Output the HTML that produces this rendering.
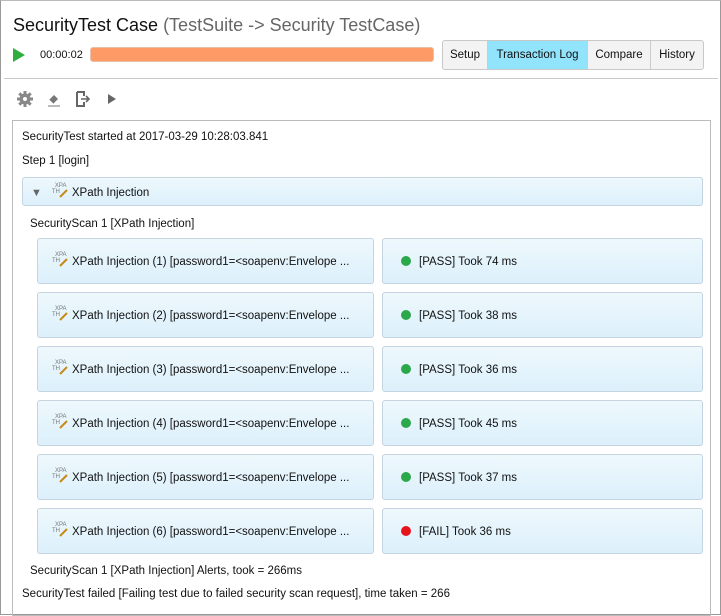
<!DOCTYPE html>
<html><head><style>
*{box-sizing:border-box;margin:0;padding:0}
body{width:721px;height:615px;overflow:hidden;background:#fff;font-family:"Liberation Sans",sans-serif;font-size:11.5px;color:#111;position:relative}
.frame{position:absolute;left:0;top:0;width:721px;height:615px;border:1px solid #999;border-top-color:#bbb}
.abs{position:absolute;white-space:nowrap}
.tabs{position:absolute;left:442px;top:40px;width:262px;height:30px;display:flex;border:1px solid #c8c8c8;border-radius:3px;overflow:hidden;background:#f3f3f3}
.tabs div{text-align:center;line-height:28px;font-size:11.5px;border-right:1px solid #ccc;white-space:nowrap}
.tabs div:last-child{border-right:none}
.panel{position:absolute;left:12px;top:120px;width:699px;height:496px;border:1px solid #bbb}
.box{position:absolute;height:46px;border:1px solid #c4d4e0;border-radius:3px;background:linear-gradient(#eef8fd,#dcf0fb);line-height:47px;padding-left:14px;white-space:nowrap}
.xp{display:inline-block;width:18px;height:16px;vertical-align:middle;position:relative;margin-right:2px;top:-2px}
.xp span{position:absolute;font-size:6px;color:#777;line-height:6px}
.dot{display:inline-block;width:10px;height:10px;border-radius:50%;background:#2aa84a;margin-right:8px;vertical-align:middle;position:relative;top:-1px}
</style></head><body>
<div class="frame"></div>
<div class="abs" style="left:13px;top:15px;font-size:18px;color:#111">SecurityTest Case <span style="color:#666">(TestSuite -&gt; Security TestCase)</span></div>
<svg class="abs" style="left:12px;top:47px" width="14" height="16"><path d="M1 1L13 8L1 15Z" fill="#2fae3f"/></svg>
<div class="abs" style="left:40px;top:49px;font-size:11px">00:00:02</div>
<div class="abs" style="left:90px;top:47px;width:344px;height:15px;background:#fe9a66;border:1px solid #e8c0a8;border-radius:3px"></div>
<div class="tabs"><div style="width:45px">Setup</div><div style="width:100px;background:#92e3fc">Transaction Log</div><div style="width:63px">Compare</div><div style="width:52px">History</div></div>
<div class="abs" style="left:4px;top:78px;width:714px;height:1px;background:#c8c8c8"></div>
<svg class="abs" style="left:16px;top:91px" width="18" height="16" viewBox="0 0 16 16"><circle cx="8" cy="8" r="5.5" fill="#888"/><g stroke="#888" stroke-width="3"><path d="M8 0v16M0 8h16M2.3 2.3l11.4 11.4M13.7 2.3L2.3 13.7"/></g><circle cx="8" cy="8" r="2" fill="#fff"/></svg>
<svg class="abs" style="left:46px;top:91px" width="16" height="16"><path d="M3 9L8 4L12 8L7 13Z" fill="#777"/><path d="M3 9l4 4" stroke="#fff"/><path d="M2 15h12" stroke="#777"/></svg>
<svg class="abs" style="left:75px;top:91px" width="16" height="16"><path d="M2 1h7v4M9 11v4H2V1" fill="none" stroke="#666" stroke-width="2"/><path d="M6 8h7M11 5l3 3-3 3" fill="none" stroke="#666" stroke-width="1.6"/></svg>
<svg class="abs" style="left:107px;top:93px" width="10" height="12"><path d="M1 1L9 6L1 11Z" fill="#666"/></svg>
<div class="panel"></div>
<div class="abs" style="left:22px;top:131px">SecurityTest started at 2017-03-29 10:28:03.841</div>
<div class="abs" style="left:22px;top:155px">Step 1 [login]</div>
<div class="box" style="left:22px;top:177px;width:681px;height:29px;line-height:30px;padding-left:8px"><span style="color:#666;font-size:11px;margin-right:10px">&#9660;</span><span class="xp"><span style="left:3px;top:0">XPA</span><span style="left:0;top:6px">TH</span><svg style="position:absolute;left:7px;top:5px" width="10" height="10"><path d="M1 9L8 2" stroke="#c68a1a" stroke-width="2"/></svg></span>XPath Injection</div>
<div class="abs" style="left:30px;top:218px">SecurityScan 1 [XPath Injection]</div>

<div class="box" style="left:37px;top:238px;width:337px"><span class="xp"><span style="left:3px;top:0">XPA</span><span style="left:0;top:6px">TH</span><svg style="position:absolute;left:7px;top:5px" width="10" height="10"><path d="M1 9L8 2" stroke="#c68a1a" stroke-width="2"/></svg></span>XPath Injection (1) [password1=&lt;soapenv:Envelope ...</div>
<div class="box" style="left:382px;top:238px;width:321px;padding-left:18px"><span class="dot"></span>[PASS] Took 74 ms</div>
<div class="box" style="left:37px;top:292px;width:337px"><span class="xp"><span style="left:3px;top:0">XPA</span><span style="left:0;top:6px">TH</span><svg style="position:absolute;left:7px;top:5px" width="10" height="10"><path d="M1 9L8 2" stroke="#c68a1a" stroke-width="2"/></svg></span>XPath Injection (2) [password1=&lt;soapenv:Envelope ...</div>
<div class="box" style="left:382px;top:292px;width:321px;padding-left:18px"><span class="dot"></span>[PASS] Took 38 ms</div>
<div class="box" style="left:37px;top:346px;width:337px"><span class="xp"><span style="left:3px;top:0">XPA</span><span style="left:0;top:6px">TH</span><svg style="position:absolute;left:7px;top:5px" width="10" height="10"><path d="M1 9L8 2" stroke="#c68a1a" stroke-width="2"/></svg></span>XPath Injection (3) [password1=&lt;soapenv:Envelope ...</div>
<div class="box" style="left:382px;top:346px;width:321px;padding-left:18px"><span class="dot"></span>[PASS] Took 36 ms</div>
<div class="box" style="left:37px;top:400px;width:337px"><span class="xp"><span style="left:3px;top:0">XPA</span><span style="left:0;top:6px">TH</span><svg style="position:absolute;left:7px;top:5px" width="10" height="10"><path d="M1 9L8 2" stroke="#c68a1a" stroke-width="2"/></svg></span>XPath Injection (4) [password1=&lt;soapenv:Envelope ...</div>
<div class="box" style="left:382px;top:400px;width:321px;padding-left:18px"><span class="dot"></span>[PASS] Took 45 ms</div>
<div class="box" style="left:37px;top:454px;width:337px"><span class="xp"><span style="left:3px;top:0">XPA</span><span style="left:0;top:6px">TH</span><svg style="position:absolute;left:7px;top:5px" width="10" height="10"><path d="M1 9L8 2" stroke="#c68a1a" stroke-width="2"/></svg></span>XPath Injection (5) [password1=&lt;soapenv:Envelope ...</div>
<div class="box" style="left:382px;top:454px;width:321px;padding-left:18px"><span class="dot"></span>[PASS] Took 37 ms</div>
<div class="box" style="left:37px;top:508px;width:337px"><span class="xp"><span style="left:3px;top:0">XPA</span><span style="left:0;top:6px">TH</span><svg style="position:absolute;left:7px;top:5px" width="10" height="10"><path d="M1 9L8 2" stroke="#c68a1a" stroke-width="2"/></svg></span>XPath Injection (6) [password1=&lt;soapenv:Envelope ...</div>
<div class="box" style="left:382px;top:508px;width:321px;padding-left:18px"><span class="dot" style="background:#e8141c"></span>[FAIL] Took 36 ms</div>

<div class="abs" style="left:30px;top:565px">SecurityScan 1 [XPath Injection] Alerts, took = 266ms</div>
<div class="abs" style="left:22px;top:588px">SecurityTest failed [Failing test due to failed security scan request], time taken = 266</div>
</body></html>
